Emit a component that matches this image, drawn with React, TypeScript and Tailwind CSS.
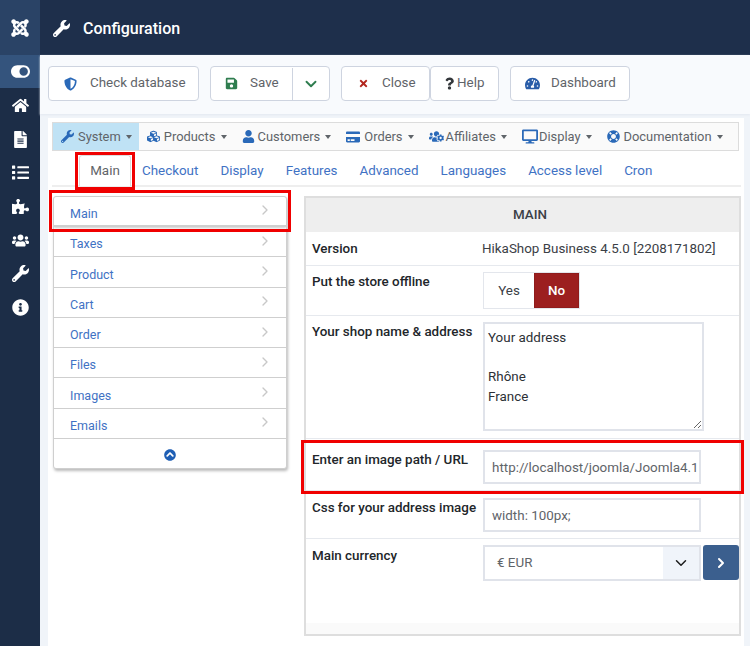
import {
  FaJoomla,
  FaWrench,
  FaToggleOn,
  FaHome,
  FaFileAlt,
  FaList,
  FaPuzzlePiece,
  FaUsers,
  FaInfoCircle,
  FaShieldAlt,
  FaSave,
  FaTimes,
  FaQuestion,
  FaTachometerAlt,
  FaCubes,
  FaUser,
  FaCreditCard,
  FaDesktop,
  FaLifeRing,
  FaUsersCog,
  FaChevronCircleUp,
} from "react-icons/fa";
import { ChevronDown, ChevronRight } from "lucide-react";
import type { ReactNode } from "react";

const sideIcons = [FaHome, FaFileAlt, FaList, FaPuzzlePiece, FaUsers, FaWrench, FaInfoCircle];

const menus = [
  { label: "System", icon: <FaWrench className="mr-[4px] h-[13px] w-[13px]" />, active: true },
  { label: "Products", icon: <FaCubes className="mr-[4px] h-[13px] w-[13px]" /> },
  { label: "Customers", icon: <FaUser className="mr-[3px] h-[13px] w-[13px]" /> },
  { label: "Orders", icon: <FaCreditCard className="mr-[4px] h-[14px] w-[14px]" /> },
  { label: "Affiliates", icon: <FaUsersCog className="mr-[2px] h-[15px] w-[15px]" /> },
  { label: "Display", icon: <FaDesktop className="mr-[1px] h-[15px] w-[16px]" /> },
  { label: "Documentation", icon: <FaLifeRing className="mr-[4px] h-[13px] w-[13px]" /> },
];

const tabs = ["Checkout", "Display", "Features", "Advanced", "Languages", "Access level", "Cron"];
const sections = ["Taxes", "Product", "Cart", "Order", "Files", "Images", "Emails"];

const ToolButton = ({ className, children }: { className: string; children: ReactNode }) => (
  <div
    className={`flex h-[35px] items-center rounded-[4px] border border-[#ced4e0] bg-white pt-[1px] text-[13.4px] text-[#5f6469] ${className}`}
  >
    {children}
  </div>
);

const Row = ({
  label,
  className,
  labelClass = "",
  children,
}: {
  label: string;
  className: string;
  labelClass?: string;
  children: ReactNode;
}) => (
  <div className={`flex border-b border-[#e6e9ee] ${className}`}>
    <div
      className={`w-[177px] shrink-0 whitespace-nowrap pl-[6px] text-[13.4px] font-medium text-[#22262a] ${labelClass}`}
    >
      {label}
    </div>
    {children}
  </div>
);

export default function App() {
  return (
    <div className="flex h-[646px] w-[750px] overflow-hidden bg-[#f0f4f9] font-['Roboto',sans-serif]">
      <aside className="flex w-[40px] shrink-0 flex-col items-center bg-[#1c2d47] text-white">
        <div className="flex h-[55px] w-full items-center justify-center bg-[#2a4366]">
          <FaJoomla className="h-[20px] w-[20px]" />
        </div>
        <div className="flex h-[33px] w-full items-center justify-center bg-[#34547d]">
          <FaToggleOn className="h-[19px] w-[19px]" />
        </div>
        <div className="flex flex-col items-center gap-[16.67px] pt-[9px]">
          {sideIcons.map((Icon, i) => (
            <Icon key={i} className="h-[17px] w-[17px]" />
          ))}
        </div>
      </aside>

      <div className="flex min-w-0 flex-1 flex-col">
        <header className="flex h-[55px] shrink-0 items-center gap-[13px] bg-[#1e2f4b] pl-[13px] pt-[2px] text-white">
          <FaWrench className="h-[17px] w-[17px]" />
          <span className="text-[16px] font-medium">Configuration</span>
        </header>

        <div className="flex h-[59px] shrink-0 items-center bg-[#f8fafd] pb-[3px] pl-[8px] shadow-[0_1px_2px_#e3e8f0]">
          <ToolButton className="w-[151px] pl-[15px]">
            <FaShieldAlt className="mr-[13px] h-[14px] w-[13px] text-[#2a69b8]" />
            Check database
          </ToolButton>
          <ToolButton className="ml-[11px] w-[120px] pl-[14px]">
            <FaSave className="mr-[12px] h-[13px] w-[13px] text-[#2f7d4f]" />
            Save
            <span className="ml-[13px] flex h-full flex-1 items-center justify-center border-l border-[#ced4e0] text-[#2f7d4f]">
              <ChevronDown className="h-[18px] w-[18px]" strokeWidth={2.5} />
            </span>
          </ToolButton>
          <ToolButton className="ml-[11px] w-[89px] pl-[16px]">
            <FaTimes className="mr-[13px] h-[11px] w-[11px] text-[#b3261e]" />
            Close
          </ToolButton>
          <ToolButton className="w-[69px] pl-[14px]">
            <FaQuestion className="mr-[3px] h-[13px] w-[9px] text-[#33373b]" />
            Help
          </ToolButton>
          <ToolButton className="ml-[11px] w-[120px] pl-[14px]">
            <FaTachometerAlt className="mr-[11px] h-[15px] w-[15px] text-[#2a5da8]" />
            Dashboard
          </ToolButton>
        </div>

        <main className="ml-[8px] mr-[6px] mt-[4px] flex-1 bg-white pl-[4px] pr-[3px] pt-[4px]">
          <nav className="mr-[2px] flex h-[29px] items-center border border-[#dcdcdc] bg-[#fafafa] text-[12.9px] text-[#5f6469]">
            {menus.map((m) => (
              <div
                key={m.label}
                className={`flex h-full items-center whitespace-nowrap pr-[7px] ${
                  m.active ? "bg-[#bfe2f5] pl-[8px]" : "ml-[8px]"
                }`}
              >
                <span className="text-[#2a69b8]">{m.icon}</span>
                {m.label}
                <span className="ml-[5px] h-0 w-0 border-x-[3.5px] border-t-[4px] border-x-transparent border-t-[#5f6469]" />
              </div>
            ))}
          </nav>

          <div className="mt-[4px] flex h-[32px] items-center border-b-2 border-[#eeeeee] pl-[27px] text-[13.4px] text-[#3f72c4]">
            <div className="relative flex h-[31px] w-[52px] items-center justify-center rounded-t-[3px] border border-b-0 border-[#dddddd] bg-white pt-[2px] text-[#5f6469]">
              Main
              <span className="absolute -inset-x-[5px] -bottom-[4px] -top-[4px] border-[3px] border-[#f00000]" />
            </div>
            <div className="ml-[11px] flex gap-[22px] pt-[2px]">
              {tabs.map((t) => (
                <span key={t}>{t}</span>
              ))}
            </div>
          </div>

          <div className="mt-[9px] flex items-start">
            <div className="relative ml-[1px] w-[234px] shrink-0 rounded-[3px] border border-[#cfcfcf] bg-white text-[12.5px] text-[#3f72c4] shadow-[1px_2px_3px_#bbbbbb]">
              <div className="relative flex h-[30px] items-center justify-between border-b-2 border-[#cfcfcf] pl-[16px] pr-[13px] pt-[6px] shadow-[0_1px_2px_#cccccc]">
                Main
                <ChevronRight className="mb-[8px] h-[16px] w-[16px] text-[#c8c8c8]" />
                <span className="absolute -bottom-[7px] -left-[5px] -right-[5px] -top-[7px] border-[3px] border-[#f00000]" />
              </div>
              {sections.map((s) => (
                <div
                  key={s}
                  className="flex h-[30.3px] items-center justify-between border-b border-[#cfcfcf] pl-[16px] pr-[13px] pt-[6px]"
                >
                  {s}
                  <ChevronRight className="mb-[8px] h-[16px] w-[16px] text-[#c8c8c8]" />
                </div>
              ))}
              <div className="flex h-[29px] items-center justify-center pt-[2px]">
                <FaChevronCircleUp className="h-[12px] w-[12px] text-[#1f5fb5]" />
              </div>
            </div>

            <div className="ml-[17px] flex h-[440px] w-[437px] shrink-0 flex-col border-2 border-[#dedede] bg-white text-[13.4px]">
              <div className="flex h-[34px] shrink-0 items-center justify-center bg-[#eeeeee] pl-[15px] text-[13.4px] font-medium text-[#3b4046]">
                MAIN
              </div>
              <Row label="Version" className="h-[34px] items-center pt-[2px]">
                <span className="-ml-[1px] whitespace-nowrap text-[#3b4046]">HikaShop Business 4.5.0 [2208171802]</span>
              </Row>
              <Row label="Put the store offline" className="h-[50px] pt-[6px]">
                <div className="flex h-[37px] w-[97px] border border-[#e3e6ec]">
                  <span className="flex w-[50px] items-center justify-center pt-[2px] text-[#3b4046]">Yes</span>
                  <span className="flex flex-1 items-center justify-center border border-[#8f1c1c] bg-[#9c1f1f] pt-[2px] font-medium text-white">
                    No
                  </span>
                </div>
              </Row>
              <Row label="Your shop name & address" className="h-[123px] pt-[6px]">
                <textarea
                  readOnly
                  className="h-[109px] w-[221px] resize border-2 border-[#e0e3ea] px-[3px] py-[4px] text-[13.4px] leading-[19.5px] text-[#2c3036] outline-none"
                  defaultValue={"Your address\n\nRhône\nFrance"}
                />
              </Row>
              <div className="relative">
                <Row label="Enter an image path / URL" className="h-[52px] pt-[11px]">
                  <input
                    readOnly
                    className="h-[34px] w-[218px] border-2 border-[#e0e3ea] pl-[7px] text-[13.4px] text-[#5f6469] outline-none"
                    defaultValue="http://localhost/joomla/Joomla4.1"
                  />
                </Row>
                <span className="absolute -bottom-[3px] -left-[5px] -right-[5px] top-[1px] border-[3px] border-[#f00000]" />
              </div>
              <Row label="Css for your address image" className="h-[48px] pt-[7px]">
                <input
                  readOnly
                  className="h-[34px] w-[218px] border-2 border-[#e0e3ea] pl-[7px] text-[13.4px] text-[#5f6469] outline-none"
                  defaultValue="width: 100px;"
                />
              </Row>
              <div className="flex h-[84px] pt-[7px]">
                <div className="w-[177px] shrink-0 pl-[6px] font-medium text-[#22262a]">Main currency</div>
                <div className="-mt-[1px] flex h-[36px] w-[218px] items-center border-2 border-[#e0e3ea] text-[#5f6469]">
                  <span className="flex-1 pl-[12px] pt-[1px]">€ EUR</span>
                  <span className="flex h-full w-[36px] items-center justify-center bg-[#f0f4fa] text-[#1d1d1d]">
                    <ChevronDown className="h-[18px] w-[18px]" strokeWidth={2} />
                  </span>
                </div>
                <div className="-mt-[1px] ml-[2px] flex h-[35px] w-[36px] items-center justify-center rounded-[3px] bg-[#3b5f8e] text-white">
                  <ChevronRight className="h-[16px] w-[16px]" strokeWidth={3} />
                </div>
              </div>
              <div className="flex-1 bg-[#fafafa]" />
            </div>
          </div>
        </main>
      </div>
    </div>
  );
}
